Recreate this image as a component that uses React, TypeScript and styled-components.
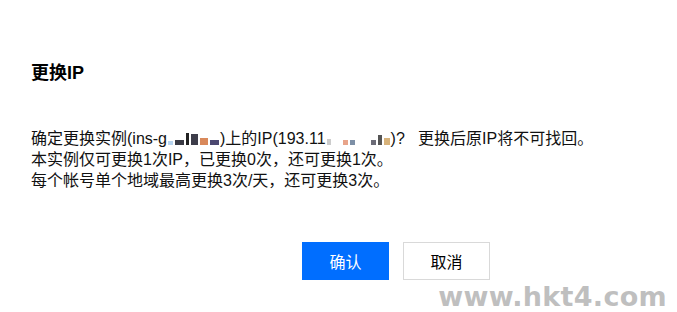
import styled, { createGlobalStyle } from 'styled-components';

const GlobalStyle = createGlobalStyle`
  html, body {
    margin: 0;
    padding: 0;
    background: #fff;
  }
  body {
    font-family: "Liberation Sans", "Noto Sans CJK SC", sans-serif;
    color: #000;
  }
`;

const Page = styled.div`
  position: relative;
  width: 677px;
  height: 312px;
  overflow: hidden;
  background: #fff;
`;

const Dialog = styled.div`
  padding: 61px 0 0 31px;
  display: flex;
  flex-direction: column;
`;

const Title = styled.h3`
  margin: 0;
  font-size: 18px;
  line-height: 24px;
  font-weight: 700;
  color: #000;
`;

const Body = styled.div`
  margin-top: 43px;
  font-size: 16px;
  line-height: 21px;
  color: #111;
`;

const Line = styled.div`
  white-space: nowrap;
`;

const Mosaic = styled.span`
  display: inline-flex;
  align-items: flex-end;
  gap: 2px;
  height: 13px;
  vertical-align: -1px;
  margin: 0 1px;
`;

const Block = styled.span<{ $w: number; $h: number; $c: string }>`
  display: inline-block;
  width: ${(p) => p.$w}px;
  height: ${(p) => p.$h}px;
  background: ${(p) => p.$c};
`;

const Footer = styled.div`
  display: flex;
  gap: 14px;
  margin-top: 51px;
  padding-left: 271px;
`;

const Button = styled.button<{ $primary?: boolean }>`
  width: 87px;
  height: 38px;
  font-family: inherit;
  font-size: 16px;
  border: 1px solid ${(p) => (p.$primary ? '#006eff' : '#d9d9d9')};
  background: ${(p) => (p.$primary ? '#006eff' : '#fff')};
  color: ${(p) => (p.$primary ? '#fff' : '#000')};
  padding: 0;
  cursor: pointer;
`;

const Watermark = styled.div`
  position: absolute;
  right: 10px;
  bottom: 0;
  font-family: "DejaVu Sans", "Liberation Sans", sans-serif;
  font-size: 27px;
  font-weight: 700;
  letter-spacing: 0.3px;
  color: #bfbfbf;
`;

export default function App() {
  return (
    <Page>
      <GlobalStyle />
      <Dialog>
        <Title>更换IP</Title>
        <Body>
          <Line>
            确定更换实例(ins-g
            <Mosaic>
              <Block $w={5} $h={4} $c="#b7d4ef" />
              <Block $w={9} $h={5} $c="#3a3a44" />
              <Block $w={3} $h={12} $c="#222" />
              <Block $w={7} $h={11} $c="#3d3d4a" />
              <Block $w={8} $h={7} $c="#d9895b" />
              <Block $w={9} $h={5} $c="#4b4870" />
            </Mosaic>
            )上的IP(193.11
            <Mosaic>
              <Block $w={4} $h={6} $c="#ccc" />
              <Block $w={8} $h={1} $c="transparent" />
              <Block $w={5} $h={5} $c="#e8a48a" />
              <Block $w={5} $h={5} $c="#7d8fa6" />
              <Block $w={12} $h={1} $c="transparent" />
              <Block $w={5} $h={5} $c="#6b6b77" />
              <Block $w={4} $h={10} $c="#555" />
              <Block $w={6} $h={7} $c="#d7b27a" />
            </Mosaic>
            )?&nbsp;&nbsp; 更换后原IP将不可找回。
          </Line>
          <Line>本实例仅可更换1次IP，已更换0次，还可更换1次。</Line>
          <Line>每个帐号单个地域最高更换3次/天，还可更换3次。</Line>
        </Body>
        <Footer>
          <Button $primary>确认</Button>
          <Button>取消</Button>
        </Footer>
      </Dialog>
      <Watermark>www.hkt4.com</Watermark>
    </Page>
  );
}
